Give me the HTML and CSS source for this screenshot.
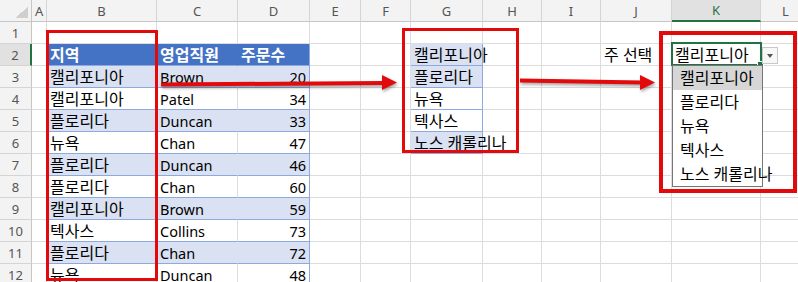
FILE: index.html
```html
<!DOCTYPE html>
<html>
    <head>
        <title>주 선택 - 드롭다운 목록</title>
        <link rel="stylesheet" href="styles.css">
    </head>
    <body>
        <div class="page">
            <table class="sheet">
                <colgroup>
                    <col style="width: 32px">
                    <col style="width: 15px">
                    <col style="width: 110px">
                    <col style="width: 81px">
                    <col style="width: 72px">
                    <col style="width: 51px">
                    <col style="width: 50px">
                    <col style="width: 72px">
                    <col style="width: 59px">
                    <col style="width: 59px">
                    <col style="width: 71px">
                    <col style="width: 89px">
                    <col style="width: 50px">
                </colgroup>
                <thead>
                    <tr class="hd">
                        <th class="corner"></th>
                        <th class="col">A</th>
                        <th class="col">B</th>
                        <th class="col">C</th>
                        <th class="col">D</th>
                        <th class="col">E</th>
                        <th class="col">F</th>
                        <th class="col">G</th>
                        <th class="col">H</th>
                        <th class="col">I</th>
                        <th class="col">J</th>
                        <th class="col on">K</th>
                        <th class="col">L</th>
                    </tr>
                </thead>
                <tbody>
                    <tr>
                        <th class="rn">1</th>
                        <td></td><td></td><td></td><td></td><td></td><td></td>
                        <td></td><td></td><td></td><td></td><td></td><td></td>
                    </tr>
                    <tr>
                        <th class="rn on">2</th>
                        <td></td>
                        <td class="hdr">지역</td>
                        <td class="hdr">영업직원</td>
                        <td class="hdr last">주문수</td>
                        <td></td><td></td>
                        <td class="lst fill">캘리포니아</td>
                        <td></td><td></td>
                        <td>주 선택</td>
                        <td>캘리포니아</td>
                        <td></td>
                    </tr>
                    <tr>
                        <th class="rn">3</th>
                        <td></td>
                        <td class="tb band">캘리포니아</td>
                        <td class="tb band en">Brown</td>
                        <td class="tb band en num">20</td>
                        <td></td><td></td>
                        <td class="lst fill">플로리다</td>
                        <td></td><td></td><td></td><td></td><td></td>
                    </tr>
                    <tr>
                        <th class="rn">4</th>
                        <td></td>
                        <td class="tb">캘리포니아</td>
                        <td class="tb en">Patel</td>
                        <td class="tb en num">34</td>
                        <td></td><td></td>
                        <td class="lst">뉴욕</td>
                        <td></td><td></td><td></td><td></td><td></td>
                    </tr>
                    <tr>
                        <th class="rn">5</th>
                        <td></td>
                        <td class="tb band">플로리다</td>
                        <td class="tb band en">Duncan</td>
                        <td class="tb band en num">33</td>
                        <td></td><td></td>
                        <td class="lst">텍사스</td>
                        <td></td><td></td><td></td><td></td><td></td>
                    </tr>
                    <tr>
                        <th class="rn">6</th>
                        <td></td>
                        <td class="tb">뉴욕</td>
                        <td class="tb en">Chan</td>
                        <td class="tb en num">47</td>
                        <td></td><td></td>
                        <td class="lst fill">노스 캐롤리나</td>
                        <td></td><td></td><td></td><td></td><td></td>
                    </tr>
                    <tr>
                        <th class="rn">7</th>
                        <td></td>
                        <td class="tb band">플로리다</td>
                        <td class="tb band en">Duncan</td>
                        <td class="tb band en num">46</td>
                        <td></td><td></td><td></td><td></td><td></td><td></td><td></td><td></td>
                    </tr>
                    <tr>
                        <th class="rn">8</th>
                        <td></td>
                        <td class="tb">플로리다</td>
                        <td class="tb en">Chan</td>
                        <td class="tb en num">60</td>
                        <td></td><td></td><td></td><td></td><td></td><td></td><td></td><td></td>
                    </tr>
                    <tr>
                        <th class="rn">9</th>
                        <td></td>
                        <td class="tb band">캘리포니아</td>
                        <td class="tb band en">Brown</td>
                        <td class="tb band en num">59</td>
                        <td></td><td></td><td></td><td></td><td></td><td></td><td></td><td></td>
                    </tr>
                    <tr>
                        <th class="rn">10</th>
                        <td></td>
                        <td class="tb">텍사스</td>
                        <td class="tb en">Collins</td>
                        <td class="tb en num">73</td>
                        <td></td><td></td><td></td><td></td><td></td><td></td><td></td><td></td>
                    </tr>
                    <tr>
                        <th class="rn">11</th>
                        <td></td>
                        <td class="tb band">플로리다</td>
                        <td class="tb band en">Chan</td>
                        <td class="tb band en num">72</td>
                        <td></td><td></td><td></td><td></td><td></td><td></td><td></td><td></td>
                    </tr>
                    <tr>
                        <th class="rn">12</th>
                        <td></td>
                        <td class="tb">뉴욕</td>
                        <td class="tb en">Duncan</td>
                        <td class="tb en num">48</td>
                        <td></td><td></td><td></td><td></td><td></td><td></td><td></td><td></td>
                    </tr>
                </tbody>
            </table>

            <!-- selected cell K2 with its validation dropdown -->
            <div class="sel"><span class="handle"></span></div>
            <div class="dd-btn"><span class="tri"></span></div>
            <ul class="dd-list">
                <li class="hl">캘리포니아</li>
                <li>플로리다</li>
                <li>뉴욕</li>
                <li>텍사스</li>
                <li>노스 캐롤리나</li>
            </ul>

            <!-- red callouts -->
            <div class="box box-src"></div>
            <div class="box box-uniq"></div>
            <div class="box box-dd"></div>

            <svg class="arrows" width="798" height="282" viewBox="0 0 798 282">
                <g fill="#e20a0a">
                    <polygon points="161,82.5 384,81 384,85 161,86.5" />
                    <polygon points="382,75 397,82.5 382,90" />
                    <polygon points="520,78.5 642,80.5 642,84.5 520,82.5" />
                    <polygon points="640,75 655,82.5 640,90" />
                </g>
            </svg>
        </div>
    </body>
</html>
```

FILE: styles.css
```css
body {
    margin: 0;
    font-family: "Noto Sans", "Noto Sans CJK KR", sans-serif;
    background: #fff;
    overflow: hidden;
}
.page {
    position: relative;
    width: 798px;
    height: 282px;
    overflow: hidden;
}
.sheet {
    border-collapse: separate;
    border-spacing: 0;
    table-layout: fixed;
    width: 811px;
    font-size: 16px;
    color: #000;
}
.sheet tr {
    height: 22px;
}
.sheet tr.hd {
    height: 21px;
}
.sheet td,
.sheet th {
    padding: 0 3px;
    line-height: 20px;
    border-right: 1px solid #dcdcdc;
    border-bottom: 1px solid #dcdcdc;
    white-space: nowrap;
    overflow: visible;
    text-align: left;
    font-weight: normal;
}
.sheet td.en {
    font-size: 14.5px;
}

/* headers */
.corner {
    background: #f3f3f3 linear-gradient(to bottom right, transparent 50%, #cfcfcf 50%) no-repeat right 3px bottom 3px / 13px 11px;
    border-right: 1px solid #c6c6c6 !important;
    border-bottom: 1px solid #c6c6c6 !important;
}
.sheet th.col {
    background: #f3f3f3;
    color: #555;
    font-size: 13px;
    text-align: center;
    border-right-color: #d4d4d4;
    border-bottom-color: #c6c6c6;
}
.sheet th.col.on {
    background: #e1e1e1;
    color: #217346;
    border-bottom: 2px solid #217346;
}
.sheet th.rn {
    background: #f3f3f3;
    color: #555;
    font-size: 13px;
    text-align: center;
    padding: 0;
    border-right-color: #c6c6c6;
    border-bottom-color: #d4d4d4;
}
.sheet th.rn.on {
    background: #e1e1e1;
    border-right: 2px solid #217346;
}

/* data table B2:D12 */
.hdr {
    background: #4472c4;
    color: #fff;
    font-weight: bold !important;
    border-right-color: #4472c4 !important;
    border-bottom-color: #8ea9db !important;
}
.hdr.last {
    border-right-color: #8ea9db !important;
}
.tb {
    border-bottom-color: #8ea9db !important;
}
.band {
    background: #d9e1f2;
    border-right-color: #d9e1f2 !important;
}
.num {
    text-align: right !important;
    border-right-color: #8ea9db !important;
}

/* unique list G2:G6 */
.lst {
    border-right-color: #8ea9db !important;
    border-bottom-color: #8ea9db !important;
}
.fill {
    background: #d9e1f2;
}

/* selection + dropdown */
.sel {
    position: absolute;
    left: 671px;
    top: 42px;
    width: 91px;
    height: 24px;
    box-sizing: border-box;
    border: 2px solid #217346;
}
.handle {
    position: absolute;
    right: -4px;
    bottom: -4px;
    width: 5px;
    height: 5px;
    background: #217346;
    border: 1px solid #fff;
}
.dd-btn {
    position: absolute;
    left: 762px;
    top: 47px;
    width: 16px;
    height: 17px;
    box-sizing: border-box;
    border: 1px solid #c8c8c8;
    background: #f7f7f7;
    display: flex;
    align-items: center;
    justify-content: center;
}
.tri {
    width: 0;
    height: 0;
    border-left: 3.5px solid transparent;
    border-right: 3.5px solid transparent;
    border-top: 4px solid #555;
    margin-top: 1px;
}
.dd-list {
    position: absolute;
    left: 672px;
    top: 65px;
    width: 89px;
    margin: 0;
    padding: 0;
    list-style: none;
    background: #fff;
    border: 1px solid #767676;
    font-size: 16px;
}
.dd-list li {
    height: 24px;
    line-height: 24px;
    padding-left: 7px;
    white-space: nowrap;
}
.dd-list li.hl {
    background: #d6d6d6;
}

/* red callout boxes */
.box {
    position: absolute;
    box-sizing: border-box;
    border: 3px solid #e20a0a;
}
.box-src {
    left: 46px;
    top: 30px;
    width: 112px;
    height: 251px;
}
.box-uniq {
    left: 402px;
    top: 28px;
    width: 117px;
    height: 125px;
}
.box-dd {
    left: 659px;
    top: 31px;
    width: 138px;
    height: 162px;
    border-width: 4px;
}
.arrows {
    position: absolute;
    left: 0;
    top: 0;
    filter: drop-shadow(1px 2px 1.5px rgba(0, 0, 0, 0.35));
}
```
